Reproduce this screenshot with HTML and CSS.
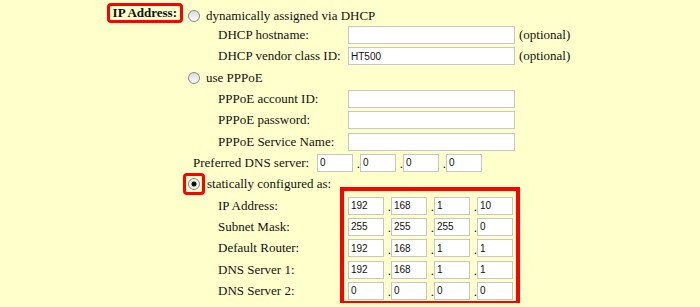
FILE: index.html
```html
<!DOCTYPE html>
<html lang="en">
<head>
    <meta charset="UTF-8">
    <title>IP Address Settings</title>
    <link rel="stylesheet" href="styles.css">
</head>
<body>
    <div class="section">
        <div class="head">
            <span class="head-label">IP Address:</span>
        </div>
        <div class="options">
            <div class="row row-first">
                <input type="radio" name="mode" class="radio">
                <span>dynamically assigned via DHCP</span>
            </div>
            <div class="row sub">
                <span class="field-label">DHCP hostname:</span>
                <input type="text" class="text-long">
                <span class="note">(optional)</span>
            </div>
            <div class="row sub">
                <span class="field-label">DHCP vendor class ID:</span>
                <input type="text" class="text-long" value="HT500">
                <span class="note">(optional)</span>
            </div>

            <div class="row">
                <input type="radio" name="mode" class="radio">
                <span>use PPPoE</span>
            </div>
            <div class="row sub">
                <span class="field-label">PPPoE account ID:</span>
                <input type="text" class="text-long">
            </div>
            <div class="row sub">
                <span class="field-label">PPPoE password:</span>
                <input type="password" class="text-long">
            </div>
            <div class="row sub">
                <span class="field-label">PPPoE Service Name:</span>
                <input type="text" class="text-long">
            </div>

            <div class="row dns-row">
                <span class="dns-label">Preferred DNS server:</span>
                <div class="ip">
                    <input type="text" class="octet" value="0"><span class="dot">.</span><input type="text" class="octet" value="0"><span class="dot">.</span><input type="text" class="octet" value="0"><span class="dot">.</span><input type="text" class="octet" value="0">
                </div>
            </div>

            <div class="row">
                <span class="radio-mark"><input type="radio" name="mode" class="radio" checked></span>
                <span>statically configured as:</span>
            </div>
            <div class="static-block">
                <div class="mark-box"></div>
                <div class="row sub">
                    <span class="field-label">IP Address:</span>
                    <div class="ip">
                        <input type="text" class="octet" value="192"><span class="dot">.</span><input type="text" class="octet" value="168"><span class="dot">.</span><input type="text" class="octet" value="1"><span class="dot">.</span><input type="text" class="octet" value="10">
                    </div>
                </div>
                <div class="row sub">
                    <span class="field-label">Subnet Mask:</span>
                    <div class="ip">
                        <input type="text" class="octet" value="255"><span class="dot">.</span><input type="text" class="octet" value="255"><span class="dot">.</span><input type="text" class="octet" value="255"><span class="dot">.</span><input type="text" class="octet" value="0">
                    </div>
                </div>
                <div class="row sub">
                    <span class="field-label">Default Router:</span>
                    <div class="ip">
                        <input type="text" class="octet" value="192"><span class="dot">.</span><input type="text" class="octet" value="168"><span class="dot">.</span><input type="text" class="octet" value="1"><span class="dot">.</span><input type="text" class="octet" value="1">
                    </div>
                </div>
                <div class="row sub">
                    <span class="field-label">DNS Server 1:</span>
                    <div class="ip">
                        <input type="text" class="octet" value="192"><span class="dot">.</span><input type="text" class="octet" value="168"><span class="dot">.</span><input type="text" class="octet" value="1"><span class="dot">.</span><input type="text" class="octet" value="1">
                    </div>
                </div>
                <div class="row sub">
                    <span class="field-label">DNS Server 2:</span>
                    <div class="ip">
                        <input type="text" class="octet" value="0"><span class="dot">.</span><input type="text" class="octet" value="0"><span class="dot">.</span><input type="text" class="octet" value="0"><span class="dot">.</span><input type="text" class="octet" value="0">
                    </div>
                </div>
            </div>
        </div>
    </div>
</body>
</html>
```

FILE: styles.css
```css
* {
    box-sizing: border-box;
}

body {
    margin: 0;
    background-color: #ffffcc;
    font-family: "Liberation Serif", "Times New Roman", serif;
    font-size: 13px;
    color: #111;
    overflow: hidden;
}

.section {
    display: flex;
    align-items: flex-start;
    padding-top: 3px;
}

.head {
    width: 183px;
    display: flex;
    justify-content: flex-end;
}

.head-label {
    font-weight: bold;
    line-height: 14px;
    padding: 0 3px;
    border: 3px solid #ff0000;
    border-radius: 4px;
    white-space: nowrap;
}

.options {
    margin-left: 5px;
    margin-top: 4px;
}

.row {
    display: flex;
    align-items: center;
    height: 18px;
    margin-bottom: 3.33px;
    white-space: nowrap;
}

.row-first {
    margin-bottom: 1px;
}

.sub {
    padding-left: 30px;
}

.field-label {
    width: 130px;
}

.dns-row {
    padding-left: 5px;
}

.dns-label {
    width: 124px;
}

.radio {
    appearance: none;
    -webkit-appearance: none;
    width: 12px;
    height: 12px;
    margin: 0 6px 0 0;
    border: 1px solid #8a8a8a;
    border-radius: 50%;
    background: linear-gradient(#dcdcdc, #fbfbfb);
}

.radio:checked {
    background: radial-gradient(circle, #111 0, #111 2.2px, #e2e2e2 2.8px, #fbfbfb 5px);
}

.radio-mark {
    display: flex;
    padding: 2px;
    margin-left: -5px;
    margin-right: 2px;
    border: 3px solid #ff0000;
    border-radius: 4px;
}

.radio-mark .radio {
    margin: 0;
}

input[type="text"],
input[type="password"] {
    height: 18px;
    margin: 0;
    padding: 0 2px;
    border: 1px solid #c6c6c6;
    background: #fff;
    font-family: "Liberation Sans", Arial, sans-serif;
    font-size: 10px;
    color: #111;
    outline: none;
}

.text-long {
    width: 167px;
}

.note {
    margin-left: 4px;
}

.ip {
    display: flex;
    align-items: center;
}

.octet {
    width: 36px;
}

.dot {
    width: 7px;
    text-align: right;
    line-height: 18px;
    padding-top: 3px;
}

.static-block {
    position: relative;
}

.mark-box {
    position: absolute;
    left: 152px;
    top: -10px;
    width: 180px;
    height: 118px;
    border: 4px solid #ff0000;
}
```
